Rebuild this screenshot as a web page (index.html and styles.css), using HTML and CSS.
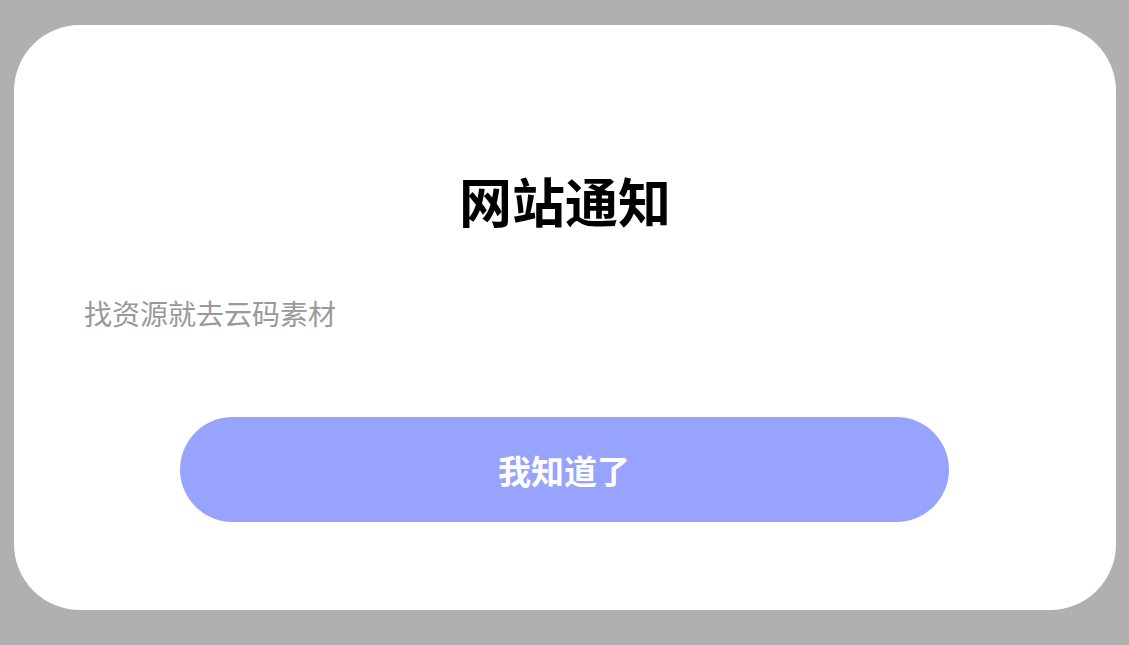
FILE: index.html
```html
<!DOCTYPE html>
<html lang="zh-CN">
<head>
<meta charset="utf-8">
<title>网站通知</title>
<link rel="stylesheet" href="styles.css">
</head>
<body>
<div class="page">
  <div class="card">
    <h1 class="title">网站通知</h1>
    <p class="message">找资源就去云码素材</p>
    <div class="actions">
      <button class="btn">我知道了</button>
    </div>
  </div>
</div>
</body>
</html>
```

FILE: styles.css
```css
html, body {
  margin: 0;
  padding: 0;
  height: 100%;
}
body {
  background: #b0b0b0;
  font-family: "Noto Sans CJK SC", "Noto Sans", sans-serif;
}
.page {
  padding: 25px 13px 0 14px;
}
.card {
  box-sizing: border-box;
  background: #ffffff;
  border-radius: 66px;
  height: 585px;
  padding: 140px 70px 0 70px;
  display: flex;
  flex-direction: column;
}
.title {
  margin: 0;
  font-size: 53px;
  line-height: 70px;
  font-weight: 700;
  color: #000;
  text-align: center;
}
.message {
  margin: 58px 0 0 0;
  font-size: 28px;
  line-height: 40px;
  color: #999999;
}
.actions {
  margin-top: 84px;
  display: flex;
  justify-content: center;
}
.btn {
  width: 769px;
  height: 105px;
  border: none;
  border-radius: 53px;
  background: #98a3fd;
  color: #ffffff;
  font-family: "Noto Sans CJK SC", "Noto Sans", sans-serif;
  font-size: 33px;
  font-weight: 700;
  padding: 0;
  margin-left: -2px;
}
```
